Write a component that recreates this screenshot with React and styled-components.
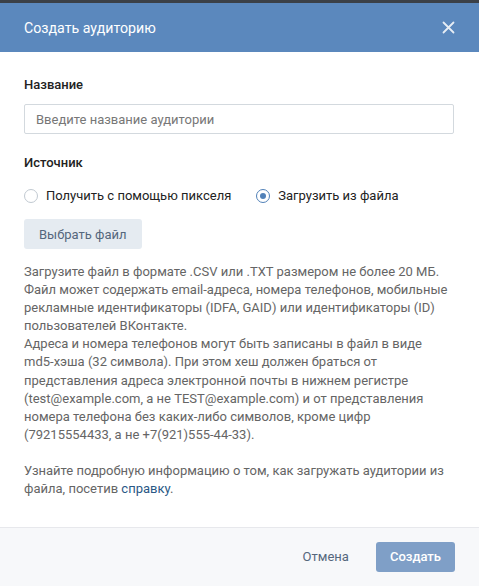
import React from 'react'
import styled, { createGlobalStyle } from 'styled-components'

const GlobalStyle = createGlobalStyle`
  html, body {
    margin: 0;
    padding: 0;
    background: #3b4047;
  }
  body {
    font-family: Roboto, "Open Sans", "Liberation Sans", sans-serif;
    -webkit-font-smoothing: antialiased;
  }
`

const infoLines = [
  'Загрузите файл в формате .CSV или .TXT размером не более 20 МБ.',
  'Файл может содержать email-адреса, номера телефонов, мобильные',
  'рекламные идентификаторы (IDFA, GAID) или идентификаторы (ID)',
  'пользователей ВКонтакте.',
  'Адреса и номера телефонов могут быть записаны в файл в виде',
  'md5-хэша (32 символа). При этом хеш должен браться от',
  'представления адреса электронной почты в нижнем регистре',
  '(test@example.com, а не TEST@example.com) и от представления',
  'номера телефона без каких-либо символов, кроме цифр',
  '(79215554433, а не +7(921)555-44-33).',
]

const CloseIcon = () => (
  <svg width="13" height="13" viewBox="0 0 13 13" fill="none">
    <path d="M1.5 1.5l10 10M11.5 1.5l-10 10" stroke="#fff" strokeWidth="1.8" strokeLinecap="round" />
  </svg>
)

const App = () => (
  <>
    <GlobalStyle />
    <Modal>
      <Header>
        <Title>Создать аудиторию</Title>
        <CloseButton aria-label="Закрыть">
          <CloseIcon />
        </CloseButton>
      </Header>
      <Body>
        <Label>Название</Label>
        <Input placeholder="Введите название аудитории" />
        <Label $top={20}>Источник</Label>
        <RadioGroup>
          <RadioItem>
            <Radio />
            Получить с помощью пикселя
          </RadioItem>
          <RadioItem>
            <Radio $checked />
            Загрузить из файла
          </RadioItem>
        </RadioGroup>
        <SecondaryButton>Выбрать файл</SecondaryButton>
        <Info>
          {infoLines.map(line => (
            <Line key={line}>{line}</Line>
          ))}
          <Line>&nbsp;</Line>
          <Line>Узнайте подробную информацию о том, как загружать аудитории из</Line>
          <Line>
            файла, посетив <Link href="#">справку</Link>.
          </Line>
        </Info>
      </Body>
      <Footer>
        <FlatButton>Отмена</FlatButton>
        <PrimaryButton disabled>Создать</PrimaryButton>
      </Footer>
    </Modal>
  </>
)

const Modal = styled.div`
  margin-top: 3px;
  width: 479px;
  height: 583px;
  display: flex;
  flex-direction: column;
  background: #fff;
  overflow: hidden;
`

const Header = styled.div`
  height: 49px;
  flex-shrink: 0;
  display: flex;
  align-items: center;
  justify-content: space-between;
  padding: 0 19px 0 24px;
  background: #5b88bd;
`

const Title = styled.div`
  color: #fff;
  font-size: 14.2px;
  font-weight: 400;
  padding-top: 1px;
`

const CloseButton = styled.button`
  display: flex;
  align-items: center;
  justify-content: center;
  width: 24px;
  height: 24px;
  padding: 0;
  border: none;
  background: none;
  cursor: pointer;
  opacity: 0.85;
`

const Body = styled.div`
  flex: 1;
  padding: 24px 25px 0 24px;
`

const Label = styled.div`
  margin-top: ${props => props.$top || 0}px;
  font-size: 13px;
  font-weight: 500;
  color: #222;
  line-height: 18px;
`

const Input = styled.input`
  display: block;
  box-sizing: border-box;
  width: 100%;
  height: 30px;
  margin-top: 10px;
  padding: 0 11px;
  border: 1px solid #d3d9de;
  border-radius: 2px;
  font-family: inherit;
  font-size: 13px;
  color: #000;
  outline: none;

  &::placeholder {
    color: #777;
  }
`

const RadioGroup = styled.div`
  display: flex;
  gap: 25px;
  margin-top: 15px;
`

const RadioItem = styled.label`
  display: flex;
  align-items: center;
  gap: 8px;
  font-size: 13px;
  color: #222;
  line-height: 18px;
  cursor: pointer;
`

const Radio = styled.span`
  box-sizing: border-box;
  position: relative;
  width: 14px;
  height: 14px;
  border-radius: 50%;
  border: 1px solid ${props => (props.$checked ? '#5181b8' : '#c1c9d1')};

  &::after {
    content: '';
    display: ${props => (props.$checked ? 'block' : 'none')};
    position: absolute;
    left: 3px;
    top: 3px;
    width: 6px;
    height: 6px;
    border-radius: 50%;
    background: #5181b8;
  }
`

const SecondaryButton = styled.button`
  display: block;
  margin-top: 14px;
  height: 30px;
  padding: 0 15px;
  border: none;
  border-radius: 3px;
  background: #e5ebf1;
  color: #55677d;
  font-family: inherit;
  font-size: 13px;
  cursor: pointer;
`

const Info = styled.div`
  margin-top: 14px;
  font-size: 13px;
  line-height: 18.1px;
  color: #656565;
`

const Line = styled.div`
  white-space: nowrap;
`

const Link = styled.a`
  color: #2a5885;
  text-decoration: none;
`

const Footer = styled.div`
  height: 57px;
  flex-shrink: 0;
  display: flex;
  align-items: center;
  justify-content: flex-end;
  gap: 11px;
  padding: 0 24px 1px;
  border-top: 1px solid #e7e8ec;
  background: #f7f8fa;
`

const FlatButton = styled.button`
  height: 30px;
  padding: 0 16px;
  border: none;
  background: none;
  color: #55677d;
  font-family: inherit;
  font-size: 13px;
  cursor: pointer;
`

const PrimaryButton = styled.button`
  height: 30px;
  padding: 0 14px;
  border: none;
  border-radius: 3px;
  background: #7f9fc7;
  color: #fff;
  font-family: inherit;
  font-size: 13px;
  font-weight: 500;
  cursor: default;
`

export default App
